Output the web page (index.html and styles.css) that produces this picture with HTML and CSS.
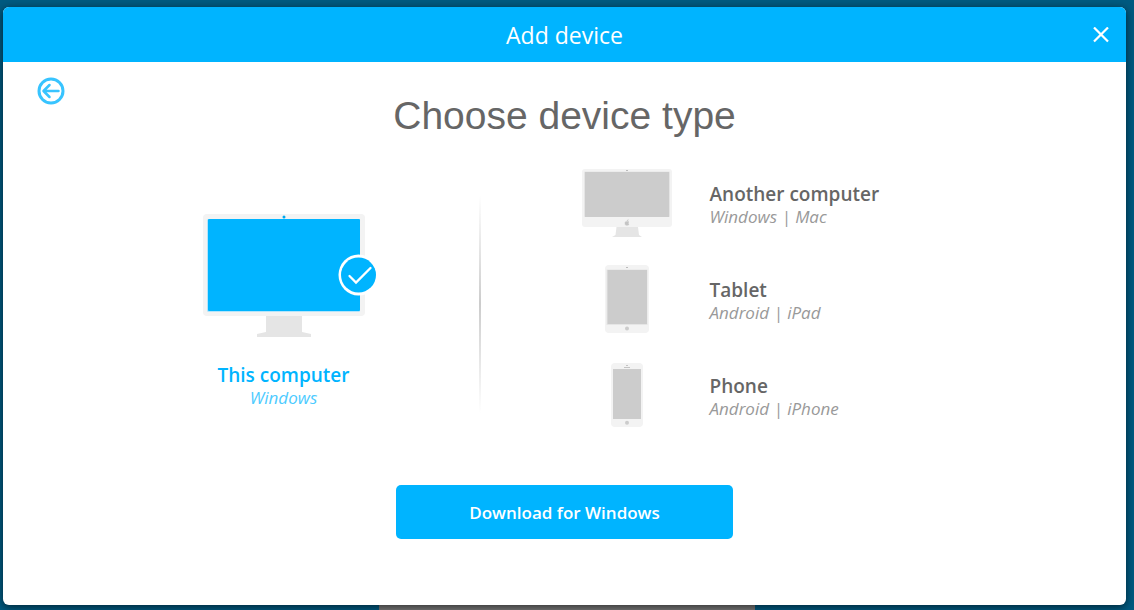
FILE: index.html
```html
<!DOCTYPE html>
<html lang="en">
<head>
<meta charset="utf-8">
<meta name="viewport" content="width=device-width, initial-scale=1">
<title>Add device</title>
<link rel="stylesheet" href="styles.css">
</head>
<body>
<div class="page">
  <section class="dialog" role="dialog" aria-labelledby="dialog-title">
    <header class="titlebar">
      <h1 class="titlebar-text" id="dialog-title">Add device</h1>
      <button class="close" type="button" aria-label="Close">
        <svg width="16" height="16" viewBox="0 0 16 16"><path d="M1 0.500L15 14.500M15 0.500L1 14.500" fill="none" stroke="#fff" stroke-width="2.200"/></svg>
      </button>
    </header>
    <form class="content">
      <div class="top">
        <button class="back" type="button" aria-label="Back">
          <svg width="28" height="28" viewBox="0 0 28 28" fill="none" stroke="#38c4ff"><circle cx="14" cy="14" r="12" stroke-width="3"/><path d="M21.500 14H7M12.500 8L6.500 14L12.500 20" stroke-width="2.500" stroke-linecap="round" stroke-linejoin="round"/></svg>
        </button>
        <h2 class="heading">Choose device type</h2>
      </div>
      <div class="choices">
        <label class="current">
          <input class="radio" type="radio" name="device" value="this" checked>
          <svg class="current-art" width="190" height="124" viewBox="0 0 190 124">
            <rect x="14" y="0" width="162" height="102" rx="4" fill="#f3f3f3"/>
            <rect x="18" y="5" width="153" height="93" rx="1.500" fill="#b3e5fb"/>
            <rect x="19" y="5" width="152" height="92" rx="1" fill="#00b4ff"/>
            <circle cx="95" cy="3" r="1.500" fill="#00a8ee"/>
            <path d="M77 102H113V118L122 120V123H68V120L77 118Z" fill="#e5e5e5"/>
            <ellipse cx="169.500" cy="61" rx="20" ry="20.500" fill="#fff"/>
            <ellipse cx="169.500" cy="61" rx="17.500" ry="17.500" fill="#00b4ff"/>
            <path d="M160.500 62L167 68.500L181.500 54" fill="none" stroke="#fff" stroke-width="2.300" stroke-linecap="round"/>
          </svg>
          <span class="name">This computer</span>
          <span class="systems">Windows</span>
        </label>
        <div class="divider"></div>
        <div class="others">
          <label class="device">
            <input class="radio" type="radio" name="device" value="computer">
            <svg width="90" height="70" viewBox="0 0 90 70">
              <rect y="1" width="90" height="58" rx="3" fill="#f3f3f3"/>
              <rect x="2" y="3.500" width="86" height="45.500" rx="1" fill="#e5e5e5"/>
              <rect x="3" y="4" width="84" height="45" fill="#ccc"/>
              <rect x="44" y="2" width="2" height="1" fill="#bbb"/>
              <path d="M45 53.800C43.400 53 42.800 54.200 43 56C43.200 57 44 57.600 45 57.200C46 57.600 46.700 57 47 56.200C46 55.500 46 54.600 47 54C46.400 53.400 45.800 53.500 45 53.800ZM45 53.200Q45 52 46.300 51.500Q46.400 52.900 45 53.200Z" fill="#c4c4c4" stroke="#c4c4c4" stroke-width="0.400"/>
              <path d="M34.500 59H56L57 67L60 69H30L33.500 67Z" fill="#e5e5e5"/>
            </svg>
            <span class="caption"><span class="name">Another computer</span><span class="systems">Windows | Mac</span></span>
          </label>
          <label class="device">
            <input class="radio" type="radio" name="device" value="tablet">
            <svg width="90" height="70" viewBox="0 0 90 70">
              <rect x="23" y="1" width="44" height="68" rx="4" fill="#f3f3f3"/>
              <rect x="24.500" y="5.500" width="41" height="55.500" fill="#e5e5e5"/>
              <rect x="25.500" y="6" width="39.500" height="54" fill="#ccc"/>
              <rect x="44" y="3" width="2" height="1" fill="#bbb"/>
              <circle cx="45" cy="64.500" r="2" fill="#ccc"/>
            </svg>
            <span class="caption"><span class="name">Tablet</span><span class="systems">Android | iPad</span></span>
          </label>
          <label class="device">
            <input class="radio" type="radio" name="device" value="phone">
            <svg width="90" height="70" viewBox="0 0 90 70">
              <rect x="29" y="3" width="32" height="64" rx="4" fill="#f3f3f3"/>
              <rect x="31" y="9" width="28" height="50" fill="#ccc"/>
              <path d="M42 7.500H48M44 5.500H46" stroke="#c4c4c4" stroke-width="1"/>
              <circle cx="45" cy="62.700" r="2" fill="#ccc"/>
            </svg>
            <span class="caption"><span class="name">Phone</span><span class="systems">Android | iPhone</span></span>
          </label>
        </div>
      </div>
      <button class="download" type="button">Download for Windows</button>
    </form>
  </section>
</div>
</body>
</html>
```
FILE: styles.css
```css
* {
  box-sizing: border-box;
}

body {
  margin: 0;
  font-family: "Segoe UI", "Open Sans", sans-serif;
  color: #666;
}

button {
  border: 0;
  padding: 0;
  background: none;
  font: inherit;
  cursor: pointer;
}

svg {
  display: block;
}

.page {
  display: flex;
  min-height: 100vh;
  padding: 7px 8px 5px 3px;
  background:
    linear-gradient(#777, #777) 50% 100% / 376px 8px no-repeat,
    #005a80;
}

.dialog {
  flex: 1;
  display: flex;
  flex-direction: column;
  border-radius: 6px;
  overflow: hidden;
  background: #fff;
  box-shadow: 0 2px 8px rgba(0, 0, 0, 0.6);
}

.titlebar {
  display: grid;
  grid-template-columns: 1fr auto 1fr;
  align-items: center;
  height: 55px;
  padding: 0 17px;
  background: #00b4ff;
  color: #fff;
}

.titlebar-text {
  grid-column: 2;
  margin: 0;
  font-size: 23px;
  font-weight: 400;
  line-height: 32px;
}

.close {
  justify-self: end;
}

.content {
  display: flex;
  flex-direction: column;
  align-items: center;
  padding: 15px 34px;
}

.top {
  display: grid;
  grid-template-columns: 1fr auto 1fr;
  align-items: start;
  align-self: stretch;
}

.back {
  justify-self: start;
}

.heading {
  margin: 16px 0 0;
  font-family: "Liberation Sans", Arial, sans-serif;
  font-size: 39px;
  font-weight: 400;
  line-height: 46px;
}

.choices {
  display: grid;
  grid-template-columns: 390px 2px 1fr;
  width: 100%;
  max-width: 952px;
  margin-top: 16px;
}

.radio {
  position: absolute;
  opacity: 0;
  pointer-events: none;
}

.current {
  display: flex;
  flex-direction: column;
  align-items: center;
  padding-top: 59px;
  color: #00b4ff;
}

.current-art {
  margin-bottom: 26px;
}

.name,
.systems {
  display: block;
}

.name {
  font-size: 19px;
  font-weight: 600;
  line-height: 23px;
}

.systems {
  font-size: 17px;
  font-style: italic;
  line-height: 22px;
  color: #999;
}

.current .systems {
  color: #4dcbff;
}

.divider {
  margin: 40px 0 30px;
  background: linear-gradient(transparent, #ccc 50%, transparent);
}

.others {
  padding-left: 101px;
}

.device {
  display: flex;
  align-items: center;
  gap: 38px;
  height: 96px;
}

.caption {
  padding-top: 5px;
}

.download {
  width: 337px;
  height: 54px;
  margin-top: 42px;
  border-radius: 5px;
  background: #00b4ff;
  color: #fff;
  font-size: 17px;
  font-weight: 600;
}
```
